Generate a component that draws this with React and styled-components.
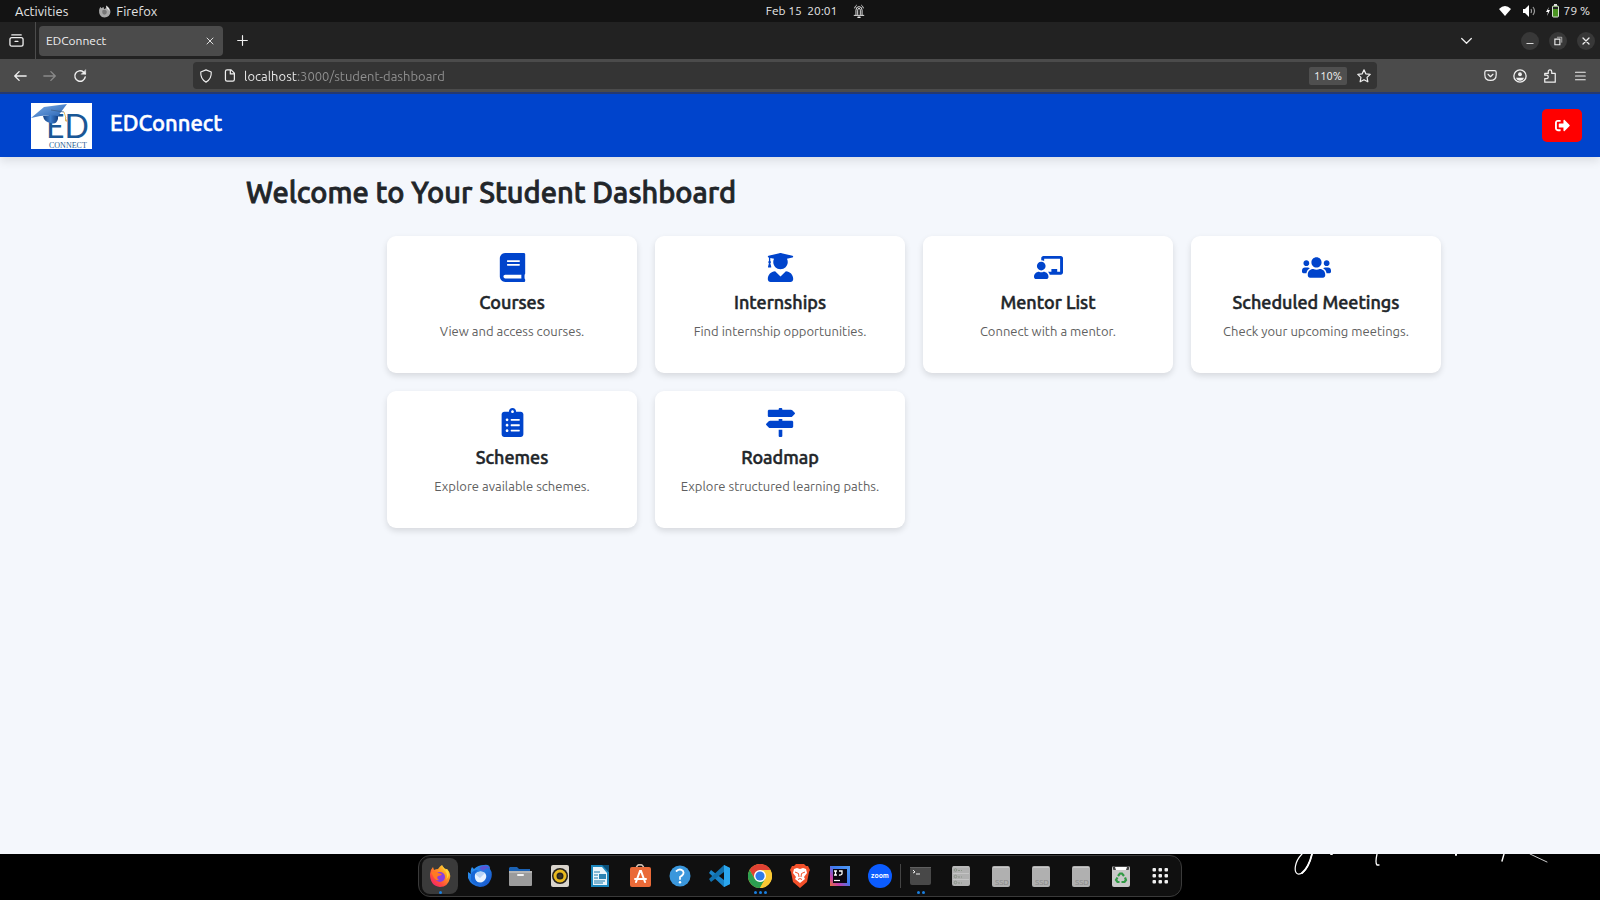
import React from "react";
import styled, { createGlobalStyle, css } from "styled-components";
import {
  FaBook,
  FaUserGraduate,
  FaChalkboardTeacher,
  FaUsers,
  FaClipboardList,
  FaMapSigns,
  FaSignOutAlt,
} from "react-icons/fa";

const GlobalStyle = createGlobalStyle`
  * { box-sizing: border-box; }
  body { margin: 0; background: #000; }
  body, button, input {
    font-family: Ubuntu, "Noto Sans", "Open Sans", sans-serif;
  }
  button { padding: 0; border: 0; background: none; color: inherit; cursor: pointer; }
  svg { display: block; }
`;

/* Ubuntu Medium is often missing, so headings thicken the regular cut. */
const mediumWeight = css`
  font-weight: 500;
  -webkit-text-stroke: ${(p) => p.$stroke || "0.5px"} currentColor;
`;

const Screen = styled.div`
  min-height: 100vh;
  display: flex;
  flex-direction: column;
`;

/* ---------- system bar ---------- */

const SystemBar = styled.div`
  height: 22px;
  flex: none;
  display: grid;
  grid-template-columns: 1fr auto 1fr;
  align-items: center;
  padding: 0 10px 0 15px;
  background: #131313;
  color: #e6e6e6;
`;

const SystemGroup = styled.div`
  display: flex;
  align-items: center;
  gap: ${(p) => p.$gap}px;
  justify-content: ${(p) => (p.$end ? "flex-end" : "flex-start")};
`;

const SystemButton = styled.button`
  display: flex;
  align-items: center;
  gap: 5px;
  font-size: ${(p) => (p.$large ? 13 : 12)}px;
  line-height: 22px;
`;

const ClockButton = styled(SystemButton)`
  gap: 15px;
  padding-left: 27px;
`;

/* ---------- browser ---------- */

const TabStrip = styled.div`
  height: 37px;
  flex: none;
  display: flex;
  align-items: center;
  padding-right: 5px;
  background: #222;
  color: #f0f0f0;
`;

const IconButton = styled.button`
  width: ${(p) => p.$width || 30}px;
  height: 30px;
  display: flex;
  align-items: center;
  justify-content: center;
  color: ${(p) => (p.$dim ? "#8a8a8a" : "#efefef")};
`;

const LibrarySlot = styled.div`
  height: 37px;
  width: 36px;
  display: flex;
  align-items: center;
  border-right: 1px solid #4c4c4c;
  margin-right: 3px;
`;

const Tab = styled.div`
  width: 184px;
  height: 30px;
  display: flex;
  align-items: center;
  justify-content: space-between;
  padding: 0 0 0 7px;
  border-radius: 4px;
  background: #4b4b4b;
  font-size: 12px;
  margin-right: 4px;
`;

const Spacer = styled.div`
  flex: 1;
`;

const WindowButtons = styled.div`
  display: flex;
  gap: 10px;
  margin-left: 40px;
`;

const RoundButton = styled.button`
  width: 18px;
  height: 18px;
  display: flex;
  align-items: center;
  justify-content: center;
  border-radius: 50%;
  background: #383838;
  color: #eee;
`;

const Toolbar = styled.div`
  height: 35px;
  flex: none;
  display: flex;
  align-items: center;
  background: #4b4b4b;
  border-bottom: 2px solid #263a72;
`;

const NavButtons = styled.div`
  width: 193px;
  display: flex;
  padding-left: 5px;
`;

const AddressBar = styled.form`
  flex: 1;
  height: 27px;
  display: flex;
  align-items: center;
  padding: 0 0 0 5px;
  border-radius: 4px;
  background: #343434;
  color: #e8e8e8;
`;

const AddressInput = styled.input`
  flex: 1;
  min-width: 0;
  padding: 0;
  border: 0;
  outline: 0;
  font-size: 13px;
  line-height: 18px;
  color: transparent;
  background: linear-gradient(90deg, #f4f4f4 53px, #929292 53px);
  background-clip: text;
  -webkit-background-clip: text;
`;

const ZoomBadge = styled.button`
  height: 18px;
  width: 38px;
  border-radius: 2px;
  background: #4f4f4f;
  color: #f0f0f0;
  font-size: 11px;
  line-height: 18px;
  margin-right: 4px;
`;

const ToolbarEnd = styled.div`
  width: 223px;
  display: flex;
  justify-content: flex-end;
  padding-right: 5px;
`;

/* ---------- page ---------- */

const Page = styled.div`
  flex: 1;
  display: flex;
  flex-direction: column;
  background: #f4f7fc;
  color: #212529;
`;

const Header = styled.header`
  height: 63px;
  display: flex;
  align-items: center;
  padding: 0 18px 0 31px;
  background: #0044cc;
  box-shadow: 0 4px 9px rgba(0, 0, 0, 0.1);
`;

const Brand = styled.h1`
  ${mediumWeight}
  margin: 0;
  flex: 1;
  padding: 0 0 6px 18px;
  color: #fff;
  font-size: 22px;
  line-height: 28px;
`;

const LogoutButton = styled.button`
  width: 40px;
  height: 33px;
  display: flex;
  align-items: center;
  justify-content: center;
  border-radius: 5px;
  background: #f00;
  color: #fff;
`;

const Main = styled.main`
  margin-left: 228px;
  padding: 16px 18px;
`;

const Title = styled.h2`
  ${mediumWeight}
  margin: 0 0 25px;
  font-size: 29px;
  line-height: 38px;
`;

const CardGrid = styled.div`
  display: grid;
  grid-template-columns: repeat(auto-fill, minmax(240px, 1fr));
  gap: 18px;
  max-width: 1054px;
  margin: 0 auto;
`;

const Card = styled.button`
  height: 137px;
  display: flex;
  flex-direction: column;
  align-items: center;
  padding-top: 17px;
  border-radius: 9px;
  background: #fff;
  box-shadow: 0 3px 6px rgba(0, 0, 0, 0.12);
  color: #0044cc;
`;

const CardTitle = styled.span`
  ${mediumWeight}
  margin-top: 9px;
  color: #212529;
  font-size: 18px;
  line-height: 22px;
`;

const CardText = styled.span`
  margin-top: 9px;
  color: #5f5f5f;
  font-size: 13px;
  line-height: 18px;
`;

/* ---------- dock ---------- */

const Desktop = styled.footer`
  position: relative;
  height: 46px;
  flex: none;
  display: flex;
  justify-content: center;
  align-items: flex-start;
  padding-top: 1px;
  background: #000;
`;

const Signature = styled.svg`
  position: absolute;
  top: 0;
  right: 50px;
`;

const Dock = styled.nav`
  position: relative;
  height: 42px;
  display: flex;
  align-items: center;
  padding: 0 0 0 1px;
  border: 1px solid #3a3a3a;
  border-radius: 12px;
  background: #101010;
`;

const DockItem = styled.button`
  position: relative;
  width: 36px;
  height: 36px;
  margin: 0 2px;
  display: flex;
  align-items: center;
  justify-content: center;
  border-radius: 8px;
  ${(p) => p.$active && css`background: #3a3a3a;`}
`;

const Dots = styled.span`
  position: absolute;
  left: 0;
  right: 0;
  bottom: 0;
  display: flex;
  justify-content: center;
  gap: 2px;
`;

const Dot = styled.i`
  width: 3px;
  height: 3px;
  border-radius: 50%;
  background: #1a7fe0;
`;

const DockDivider = styled.span`
  width: 1px;
  height: 24px;
  background: #444;
`;

/* ---------- drawings ---------- */

const Line = ({ size = 16, w = 1.4, children, ...rest }) => (
  <svg
    width={size}
    height={size}
    viewBox="0 0 16 16"
    fill="none"
    stroke="currentColor"
    strokeWidth={w}
    strokeLinecap="round"
    strokeLinejoin="round"
    aria-hidden="true"
    {...rest}
  >
    {children}
  </svg>
);

const Logo = () => (
  <svg width="61" height="46" viewBox="0 0 61 46" role="img" aria-label="ED Connect">
    <defs>
      <linearGradient id="cap" x1="0" y1="0" x2="1" y2="1">
        <stop offset="0" stopColor="#7fb0ea" />
        <stop offset="1" stopColor="#245fb0" />
      </linearGradient>
      <linearGradient id="capBase" x1="0" y1="0" x2="1" y2="0">
        <stop offset="0" stopColor="#123f82" />
        <stop offset="0.5" stopColor="#3d7dcc" />
        <stop offset="1" stopColor="#123f82" />
      </linearGradient>
    </defs>
    <rect width="61" height="46" fill="#fff" />
    <text>
      <tspan x="15" y="35" fontFamily="Lato, sans-serif" fontSize="32" fill="#1a5796">ED</tspan>
      <tspan x="18" y="45" fontFamily="'Liberation Serif', serif" fontSize="8" fill="#2c5d92">CONNECT</tspan>
    </text>
    <path d="M12 13 L27 11 L27 16 Q25 22 20 20 Q13 19 12 13Z" fill="url(#capBase)" />
    <path d="M0 15 L13 4 L36 1 L27 13 Q14 11 0 15Z" fill="url(#cap)" />
    <path d="M20 7 L33 9" fill="none" stroke="#3b5f8c" strokeWidth="0.8" />
    <path d="M33 9 L35 15" fill="none" stroke="#e8c06a" strokeWidth="1" />
    <path d="M34 13 L36.500 19 L34 18Z" fill="#e0b458" />
  </svg>
);

const FirefoxMono = () => (
  <svg width="13" height="13" viewBox="0 0 24 24" aria-hidden="true">
    <path d="M2 9 Q3 5 5 3 L6 6 Q8 4 11 4 Q10 6 12 8 Q16 6 15 1 Q23 6 23 13 Q22 23 12 23 Q1 22 2 9Z" fill="#a9a9a9" />
    <path d="M8 10 Q12 7 16 11 Q17 17 12 18 Q7 17 8 10Z" fill="#777" />
    <path d="M15 1 Q22 6 21 12 Q20 8 17 7Z" fill="#eee" />
  </svg>
);

const Svg24 = ({ children }) => (
  <svg width="24" height="24" viewBox="0 0 24 24" aria-hidden="true">
    {children}
  </svg>
);

const FirefoxIcon = () => (
  <Svg24>
    <defs>
      <linearGradient id="fx" x1="1" y1="0" x2="0.2" y2="1">
        <stop offset="0" stopColor="#fff04a" />
        <stop offset="0.4" stopColor="#ff9a1f" />
        <stop offset="0.75" stopColor="#ff4a3d" />
        <stop offset="1" stopColor="#f01f72" />
      </linearGradient>
    </defs>
    <path d="M2 10 Q2 6 5 3 L6 6 Q8 5 10 5 Q12 2 14 1 Q15 4 18 5 L19 5 Q23 9 22 14 Q20 23 12 23 Q2 22 2 10Z" fill="url(#fx)" />
    <circle cx="12" cy="13" r="5" fill="#8a3fe0" />
    <path d="M3 8 Q8 7 10 9 L14 10 Q13 12 10 12 Q8 14 11 16 Q7 17 5 12Z" fill="#ff7a22" />
    <path d="M14 1 Q15 5 18 8 Q20 12 18 16 Q23 11 19 5 L18 7Z" fill="#ffd43a" />
  </Svg24>
);

const ThunderbirdIcon = () => (
  <Svg24>
    <defs>
      <linearGradient id="tb" x1="0" y1="0" x2="1" y2="1">
        <stop offset="0" stopColor="#2f9bf5" />
        <stop offset="1" stopColor="#1450c8" />
      </linearGradient>
    </defs>
    <path d="M0 8 L3 10 Q2 6 4 3 L6 5 Q10 1 16 1 Q22 0 22 5 Q25 9 23 15 Q20 23 12 23 Q3 22 0 14Z" fill="url(#tb)" />
    <path d="M11 4 Q17 -1 22 4 Q17 4 15 7Z" fill="#5a55d6" />
    <path d="M7 10 Q11 6 17 9 Q20 13 16 17 Q12 20 8 17 Q5 14 7 10Z" fill="#e9f3ff" />
    <path d="M7 10 L12 14 L17 9 Q12 5 7 10Z" fill="#b8d3f5" />
    <path d="M3 10 Q5 6 10 6 Q6 9 7 14 Q8 19 13 19 Q6 22 3 16Z" fill="#1766d6" />
  </Svg24>
);

const FilesIcon = () => (
  <Svg24>
    <path d="M2 3 H9 L11 5 H22 V12 H1 V4Z" fill="#1b62b4" />
    <rect x="1" y="7" width="23" height="15" rx="1" fill="#9b9b9b" />
    <rect x="1" y="7" width="23" height="2" fill="#b5b5b5" />
    <rect x="9" y="10" width="7" height="2" rx="1" fill="#f3f3f3" />
  </Svg24>
);

const RhythmboxIcon = () => (
  <Svg24>
    <rect x="3" y="1" width="18" height="22" rx="2" fill="#d9d4cc" />
    <circle cx="12" cy="12" r="8" fill="#25221d" />
    <circle cx="12" cy="12" r="5" fill="none" stroke="#e8b91f" strokeWidth="3" />
    <circle cx="12" cy="12" r="2" fill="#3a3528" />
  </Svg24>
);

const WriterIcon = () => (
  <Svg24>
    <path d="M3 1 H15 L21 8 V23 H3Z" fill="#1c87bd" />
    <path d="M5 3 H14 L19 9 V21 H5Z" fill="#e9f5fb" />
    <path d="M14 1 H21 V8Z" fill="#0b4f77" />
    <path d="M6 8h6M6 11h4M6 14h4M6 17h11M6 19h9" stroke="#1b79aa" strokeWidth="1" />
    <rect x="11" y="10" width="7" height="5" fill="#2c84b4" />
  </Svg24>
);

const SoftwareIcon = () => (
  <Svg24>
    <path d="M8 5 Q9 0 12 1 Q15 0 16 5" fill="none" stroke="#d9c6ba" strokeWidth="1.5" />
    <rect x="2" y="3" width="21" height="20" rx="2" fill="#ea6a38" />
    <path d="M8 18 L12 7 L13 7 L17 18 M7 15 H18" fill="none" stroke="#fff" strokeWidth="2" strokeLinecap="round" />
  </Svg24>
);

const HelpIcon = () => (
  <Svg24>
    <circle cx="12" cy="12" r="10.5" fill="#3a97dc" />
    <path d="M8.5 7 Q12 4 15 7 Q17 10 12 13 V15" fill="none" stroke="#fff" strokeWidth="1.8" strokeLinecap="round" />
    <circle cx="12" cy="18.3" r="1.2" fill="#fff" />
  </Svg24>
);

const CodeIcon = () => (
  <Svg24>
    <path d="M16 1 L22 4 V20 L16 23 L1 9 L3 6 L16 16Z" fill="#1a83c8" />
    <path d="M16 1 V8 L3 18 L1 15Z" fill="#1170ad" />
    <path d="M16 1 L22 4 V20 L16 23Z" fill="#2aa6ee" />
  </Svg24>
);

const ChromeIcon = () => (
  <Svg24>
    <circle cx="12" cy="12" r="12" fill="#fbc934" />
    <path d="M12 6 H22.4 A12 12 0 0 0 1.6 6 L6.8 15Z" fill="#e04133" />
    <path d="M1.6 6 A12 12 0 0 0 12 24 L17.2 15 H12 L6.8 15Z" fill="#2c9f50" />
    <path d="M12 24 A12 12 0 0 0 22.4 6 H12 L17.2 15Z" fill="#fbc934" />
    <circle cx="12" cy="12" r="6" fill="#fff" />
    <circle cx="12" cy="12" r="4.6" fill="#2f7bea" />
  </Svg24>
);

const BraveIcon = () => (
  <Svg24>
    <path d="M8 0 H16 L18 2 L20 2 L22 6 L21 8 L19 18 L12 24 L5 18 L3 8 L2 6 L4 2 L6 2Z" fill="#f2502a" />
    <path d="M6 5 L9 4 L12 5 L15 4 L18 5 L19 9 L16 13 L17 15 L12 19 L7 15 L8 13 L5 9Z" fill="#fff" />
    <path d="M7 8 L10.500 9.500 L11 13 M17 8 L13.500 9.500 L13 13 M10 15.500 L12 14.500 L14 15.500" stroke="#f2502a" strokeWidth="1" fill="none" />
  </Svg24>
);

const IdeaIcon = () => (
  <Svg24>
    <defs>
      <linearGradient id="ij" x1="0" y1="1" x2="1" y2="0">
        <stop offset="0" stopColor="#e8743c" />
        <stop offset="0.25" stopColor="#c63fa8" />
        <stop offset="0.55" stopColor="#3d7bf0" />
        <stop offset="1" stopColor="#4f9cf5" />
      </linearGradient>
    </defs>
    <rect x="2" y="2" width="20" height="20" fill="url(#ij)" />
    <rect x="5" y="5" width="14" height="14" fill="#0b0610" />
    <path d="M6 7h3M7.500 7v4M6 11h3M11 7h3v3q-1 1.500-3 1" fill="none" stroke="#fff" strokeWidth="1.3" />
    <path d="M6 16.500h6" stroke="#fff" strokeWidth="1.2" />
  </Svg24>
);

const ZoomIcon = () => (
  <Svg24>
    <circle cx="12" cy="12" r="12" fill="#0b5cff" />
    <text x="12" y="14" textAnchor="middle" fontSize="7" fontWeight="700" fill="#fff">zoom</text>
  </Svg24>
);

const TerminalIcon = () => (
  <Svg24>
    <rect x="1" y="3" width="21" height="18" rx="2" fill="#484848" />
    <rect x="1" y="3" width="21" height="1" fill="#606060" />
    <path d="M4 6 L6 8 L4 9 M7 10 H11" fill="none" stroke="#f0f0f0" strokeWidth="1" />
  </Svg24>
);

const ServerIcon = () => (
  <Svg24>
    <rect x="3" y="2" width="18" height="20" rx="2" fill="#b0b0b0" />
    <path d="M4 3h16M4 9.500h16M4 15.500h16" stroke="#c4c4c4" />
    <g fill="none" stroke="#8a9487" strokeWidth="1">
      <circle cx="6.500" cy="6" r="1.300" />
      <circle cx="6.500" cy="12.500" r="1.300" />
      <circle cx="6.500" cy="18.500" r="1.300" />
      <path d="M9 6.500h4M9 13h4M9 19h4" strokeDasharray="2 1" />
    </g>
  </Svg24>
);

const SsdIcon = () => (
  <Svg24>
    <rect x="3" y="2" width="18" height="21" rx="2" fill="#b0b0b0" />
    <rect x="4" y="3" width="16" height="1" fill="#c8c8c8" />
    <text x="13" y="21" textAnchor="middle" fontSize="8" fill="#858585">SSD</text>
  </Svg24>
);

const TrashIcon = () => (
  <Svg24>
    <rect x="3" y="2" width="18" height="21" rx="2" fill="#c9c9c9" />
    <rect x="4" y="2" width="16" height="4" rx="1" fill="#444" />
    <path d="M6 3 h12 l-1 3 h-10Z" fill="#fff" />
    <g fill="none" stroke="#319a45" strokeWidth="2.200">
      <path d="M9 12 L11 9.500 H13 L15 12" />
      <path d="M16 13.500 L17 16 L15.500 18 H12.500" />
      <path d="M10.500 18 H8.500 L7 16 L8.500 13.500" />
    </g>
  </Svg24>
);

const AppsIcon = () => (
  <Svg24>
    {[5.5, 11.5, 17.5].map((y) =>
      [5, 11, 17].map((x) => (
        <rect key={`${x}-${y}`} x={x - 1.5} y={y - 1.5} width="3.500" height="3.500" rx="1" fill="#f0f0f0" />
      ))
    )}
  </Svg24>
);

/* ---------- data ---------- */

const cards = [
  { Icon: FaBook, title: "Courses", text: "View and access courses." },
  { Icon: FaUserGraduate, title: "Internships", text: "Find internship opportunities." },
  { Icon: FaChalkboardTeacher, title: "Mentor List", text: "Connect with a mentor." },
  { Icon: FaUsers, title: "Scheduled Meetings", text: "Check your upcoming meetings." },
  { Icon: FaClipboardList, title: "Schemes", text: "Explore available schemes." },
  { Icon: FaMapSigns, title: "Roadmap", text: "Explore structured learning paths." },
];

const apps = [
  { name: "Firefox", Icon: FirefoxIcon, dots: 1, active: true },
  { name: "Thunderbird", Icon: ThunderbirdIcon },
  { name: "Files", Icon: FilesIcon },
  { name: "Rhythmbox", Icon: RhythmboxIcon },
  { name: "Writer", Icon: WriterIcon },
  { name: "Software", Icon: SoftwareIcon },
  { name: "Help", Icon: HelpIcon },
  { name: "Code", Icon: CodeIcon },
  { name: "Chrome", Icon: ChromeIcon, dots: 3 },
  { name: "Brave", Icon: BraveIcon },
  { name: "IntelliJ", Icon: IdeaIcon },
  { name: "Zoom", Icon: ZoomIcon },
];

const places = [
  { name: "Terminal", Icon: TerminalIcon, dots: 2 },
  { name: "Server", Icon: ServerIcon },
  { name: "Disk 1", Icon: SsdIcon },
  { name: "Disk 2", Icon: SsdIcon },
  { name: "Disk 3", Icon: SsdIcon },
  { name: "Trash", Icon: TrashIcon },
  { name: "Show applications", Icon: AppsIcon },
];

const DockEntry = ({ name, Icon, dots = 0, active }) => (
  <DockItem aria-label={name} $active={active}>
    <Icon />
    {dots > 0 && (
      <Dots>
        {Array.from({ length: dots }, (_, i) => (
          <Dot key={i} />
        ))}
      </Dots>
    )}
  </DockItem>
);

export default function App() {
  return (
    <Screen>
      <GlobalStyle />

      <SystemBar>
        <SystemGroup $gap={30}>
          <SystemButton $large>Activities</SystemButton>
          <SystemButton $large>
            <FirefoxMono />
            Firefox
          </SystemButton>
        </SystemGroup>
        <ClockButton>
          <span>Feb 15&nbsp; 20:01</span>
          <Line size={14} w={1.1}>
            <path d="M2.500 13h11M4.500 12.500V7q0-4 3.500-4t3.500 4v5.500M6.500 12V7q0-2 1.500-2t1.500 2v5M3 4.500q.5-2 2-3M13 4.500q-.5-2-2-3" />
            <path d="M7 15.300h2" strokeWidth="1.800" />
          </Line>
        </ClockButton>
        <SystemGroup $gap={10} $end>
          <svg width="14" height="12" viewBox="0 0 14 12" aria-hidden="true">
            <path d="M1 4 Q7 -2 13 4 L7 11Z" fill="#fff" />
          </svg>
          <svg width="14" height="12" viewBox="0 0 14 12" aria-hidden="true">
            <path d="M1 4h2l4-4v12l-4-4h-2Z" fill="#fff" />
            <path d="M9 4q1 2 0 4M11 2q3 4 0 8" fill="none" stroke="#9a9a9a" strokeWidth="1.200" />
          </svg>
          <SystemButton>
            <svg width="13" height="14" viewBox="0 0 13 14" aria-hidden="true">
              <path d="M3 3 L0 8h2l-1 4 3-6h-2Z" fill="#fff" />
              <rect x="6.500" y="2" width="6" height="11" rx="1" fill="#4b9422" stroke="#d8e0d4" />
              <rect x="8" y="0" width="3" height="2" fill="#ddd" />
              <rect x="7" y="3" width="5" height="2" fill="#222" />
            </svg>
            79 %
          </SystemButton>
        </SystemGroup>
      </SystemBar>

      <TabStrip>
        <LibrarySlot>
          <IconButton $width={33} aria-label="Firefox View">
            <Line size={15}>
              <path d="M1 7q0-2 2-2h10q2 0 2 2v5q0 2-2 2H3q-2 0-2-2zM3 2h10M6.500 9h3" />
            </Line>
          </IconButton>
        </LibrarySlot>
        <Tab>
          <span>EDConnect</span>
          <IconButton $width={26} aria-label="Close tab">
            <Line size={8} w={1.8}>
              <path d="M2 2l12 12M14 2L2 14" />
            </Line>
          </IconButton>
        </Tab>
        <IconButton aria-label="New tab">
          <Line size={11} w={1.7}>
            <path d="M8 1v14M1 8h14" />
          </Line>
        </IconButton>
        <Spacer />
        <IconButton aria-label="List all tabs">
          <Line size={11} w={1.8}>
            <path d="M1 5l7 7 7-7" />
          </Line>
        </IconButton>
        <WindowButtons>
          <RoundButton aria-label="Minimize">
            <Line size={10} w={1.4}>
              <path d="M3 12h10" />
            </Line>
          </RoundButton>
          <RoundButton aria-label="Restore">
            <Line size={10} w={1.8} strokeLinejoin="miter">
              <path d="M3 5h8v9H3z" />
              <path d="M7 2h7v8" strokeWidth="1" />
            </Line>
          </RoundButton>
          <RoundButton aria-label="Close window">
            <Line size={8} w={2.6}>
              <path d="M2 2l12 12M14 2L2 14" />
            </Line>
          </RoundButton>
        </WindowButtons>
      </TabStrip>

      <Toolbar>
        <NavButtons>
          <IconButton aria-label="Back">
            <Line size={14} w={1.6}>
              <path d="M15 8H2M7 3L2 8l5 5" />
            </Line>
          </IconButton>
          <IconButton $dim aria-label="Forward">
            <Line size={14} w={1.6}>
              <path d="M1 8h13M9 3l5 5-5 5" />
            </Line>
          </IconButton>
          <IconButton aria-label="Reload">
            <Line size={14} w={1.6}>
              <path d="M14 9a6 6 0 1 1-2-5.500l2 2" />
              <path d="M14.500 1v5h-5z" fill="currentColor" strokeWidth="0.500" />
            </Line>
          </IconButton>
        </NavButtons>
        <AddressBar onSubmit={(e) => e.preventDefault()}>
          <IconButton type="button" $width={16} aria-label="Tracking protection">
            <Line size={14} w={1.3}>
              <path d="M8 1l6 2.500q.5 8-6 11.500q-6.500-3.500-6-11.500z" />
            </Line>
          </IconButton>
          <IconButton type="button" $width={30} aria-label="Site information">
            <Line size={13} w={1.5}>
              <path d="M3 3q0-2 2-2h5l4 4v8q0 2-2 2H5q-2 0-2-2zM9 1v5h5" />
            </Line>
          </IconButton>
          <AddressInput
            aria-label="Address"
            defaultValue="localhost:3000/student-dashboard"
            spellCheck={false}
          />
          <ZoomBadge type="button">110%</ZoomBadge>
          <IconButton type="button" $width={26} aria-label="Bookmark this page">
            <Line size={14} w={1.4}>
              <path d="M8 1l2.200 4.600 4.900.6-3.600 3.400.9 5L8 12.200 3.600 14.600l.9-5L.9 6.200l4.900-.6z" />
            </Line>
          </IconButton>
        </AddressBar>
        <ToolbarEnd>
          <IconButton aria-label="Save to Pocket">
            <Line size={13} w={1.5}>
              <path d="M3 2h10q2 0 2 2v3q0 7-7 7T1 7V4q0-2 2-2zM5 6.500l3 3 3-3" />
            </Line>
          </IconButton>
          <IconButton aria-label="Account">
            <Line size={14} w={1.5}>
              <circle cx="8" cy="8" r="7" />
              <circle cx="8" cy="6" r="2.200" fill="currentColor" stroke="none" />
              <path d="M3.500 10h9q-1 3.500-4.500 3.500T3.500 10z" fill="currentColor" stroke="none" />
            </Line>
          </IconButton>
          <IconButton aria-label="Extensions">
            <Line size={14} w={1.4}>
              <path d="M2 15V11h2q2 0 2-2T4 7H2V5h4V3q0-2 2-2t2 2v2h4v10z" />
            </Line>
          </IconButton>
          <IconButton aria-label="Menu">
            <Line size={12} w={1.5}>
              <path d="M2 3h13M2 8h13M2 13h13" />
            </Line>
          </IconButton>
        </ToolbarEnd>
      </Toolbar>

      <Page>
        <Header>
          <Logo />
          <Brand>EDConnect</Brand>
          <LogoutButton aria-label="Log out">
            <FaSignOutAlt size={15} />
          </LogoutButton>
        </Header>
        <Main>
          <Title $stroke="0.8px">Welcome to Your Student Dashboard</Title>
          <CardGrid>
            {cards.map(({ Icon, title, text }) => (
              <Card key={title}>
                <Icon size={29} />
                <CardTitle>{title}</CardTitle>
                <CardText>{text}</CardText>
              </Card>
            ))}
          </CardGrid>
        </Main>
      </Page>

      <Desktop>
        <Signature width="260" height="24" viewBox="0 0 260 24" fill="none" stroke="#fff" strokeLinecap="round" aria-hidden="true">
          <path d="M12 0 C5 7 3 18 8 20 C14 21 20 10 22 0" strokeWidth="1.200" />
          <path d="M12 19 Q19 13 22 0" strokeWidth="1.800" />
          <path d="M87 0 Q85 9 87 11 L89 11" strokeWidth="1.300" />
          <path d="M41 0h1M166 0v1" strokeWidth="2" />
          <path d="M214 0 L212 7" strokeWidth="1.400" />
          <path d="M240 0 L257 8" strokeWidth="0.800" />
        </Signature>
        <Dock aria-label="Dock">
          {apps.map((app) => (
            <DockEntry key={app.name} {...app} />
          ))}
          <DockDivider />
          {places.map((app) => (
            <DockEntry key={app.name} {...app} />
          ))}
        </Dock>
      </Desktop>
    </Screen>
  );
}
